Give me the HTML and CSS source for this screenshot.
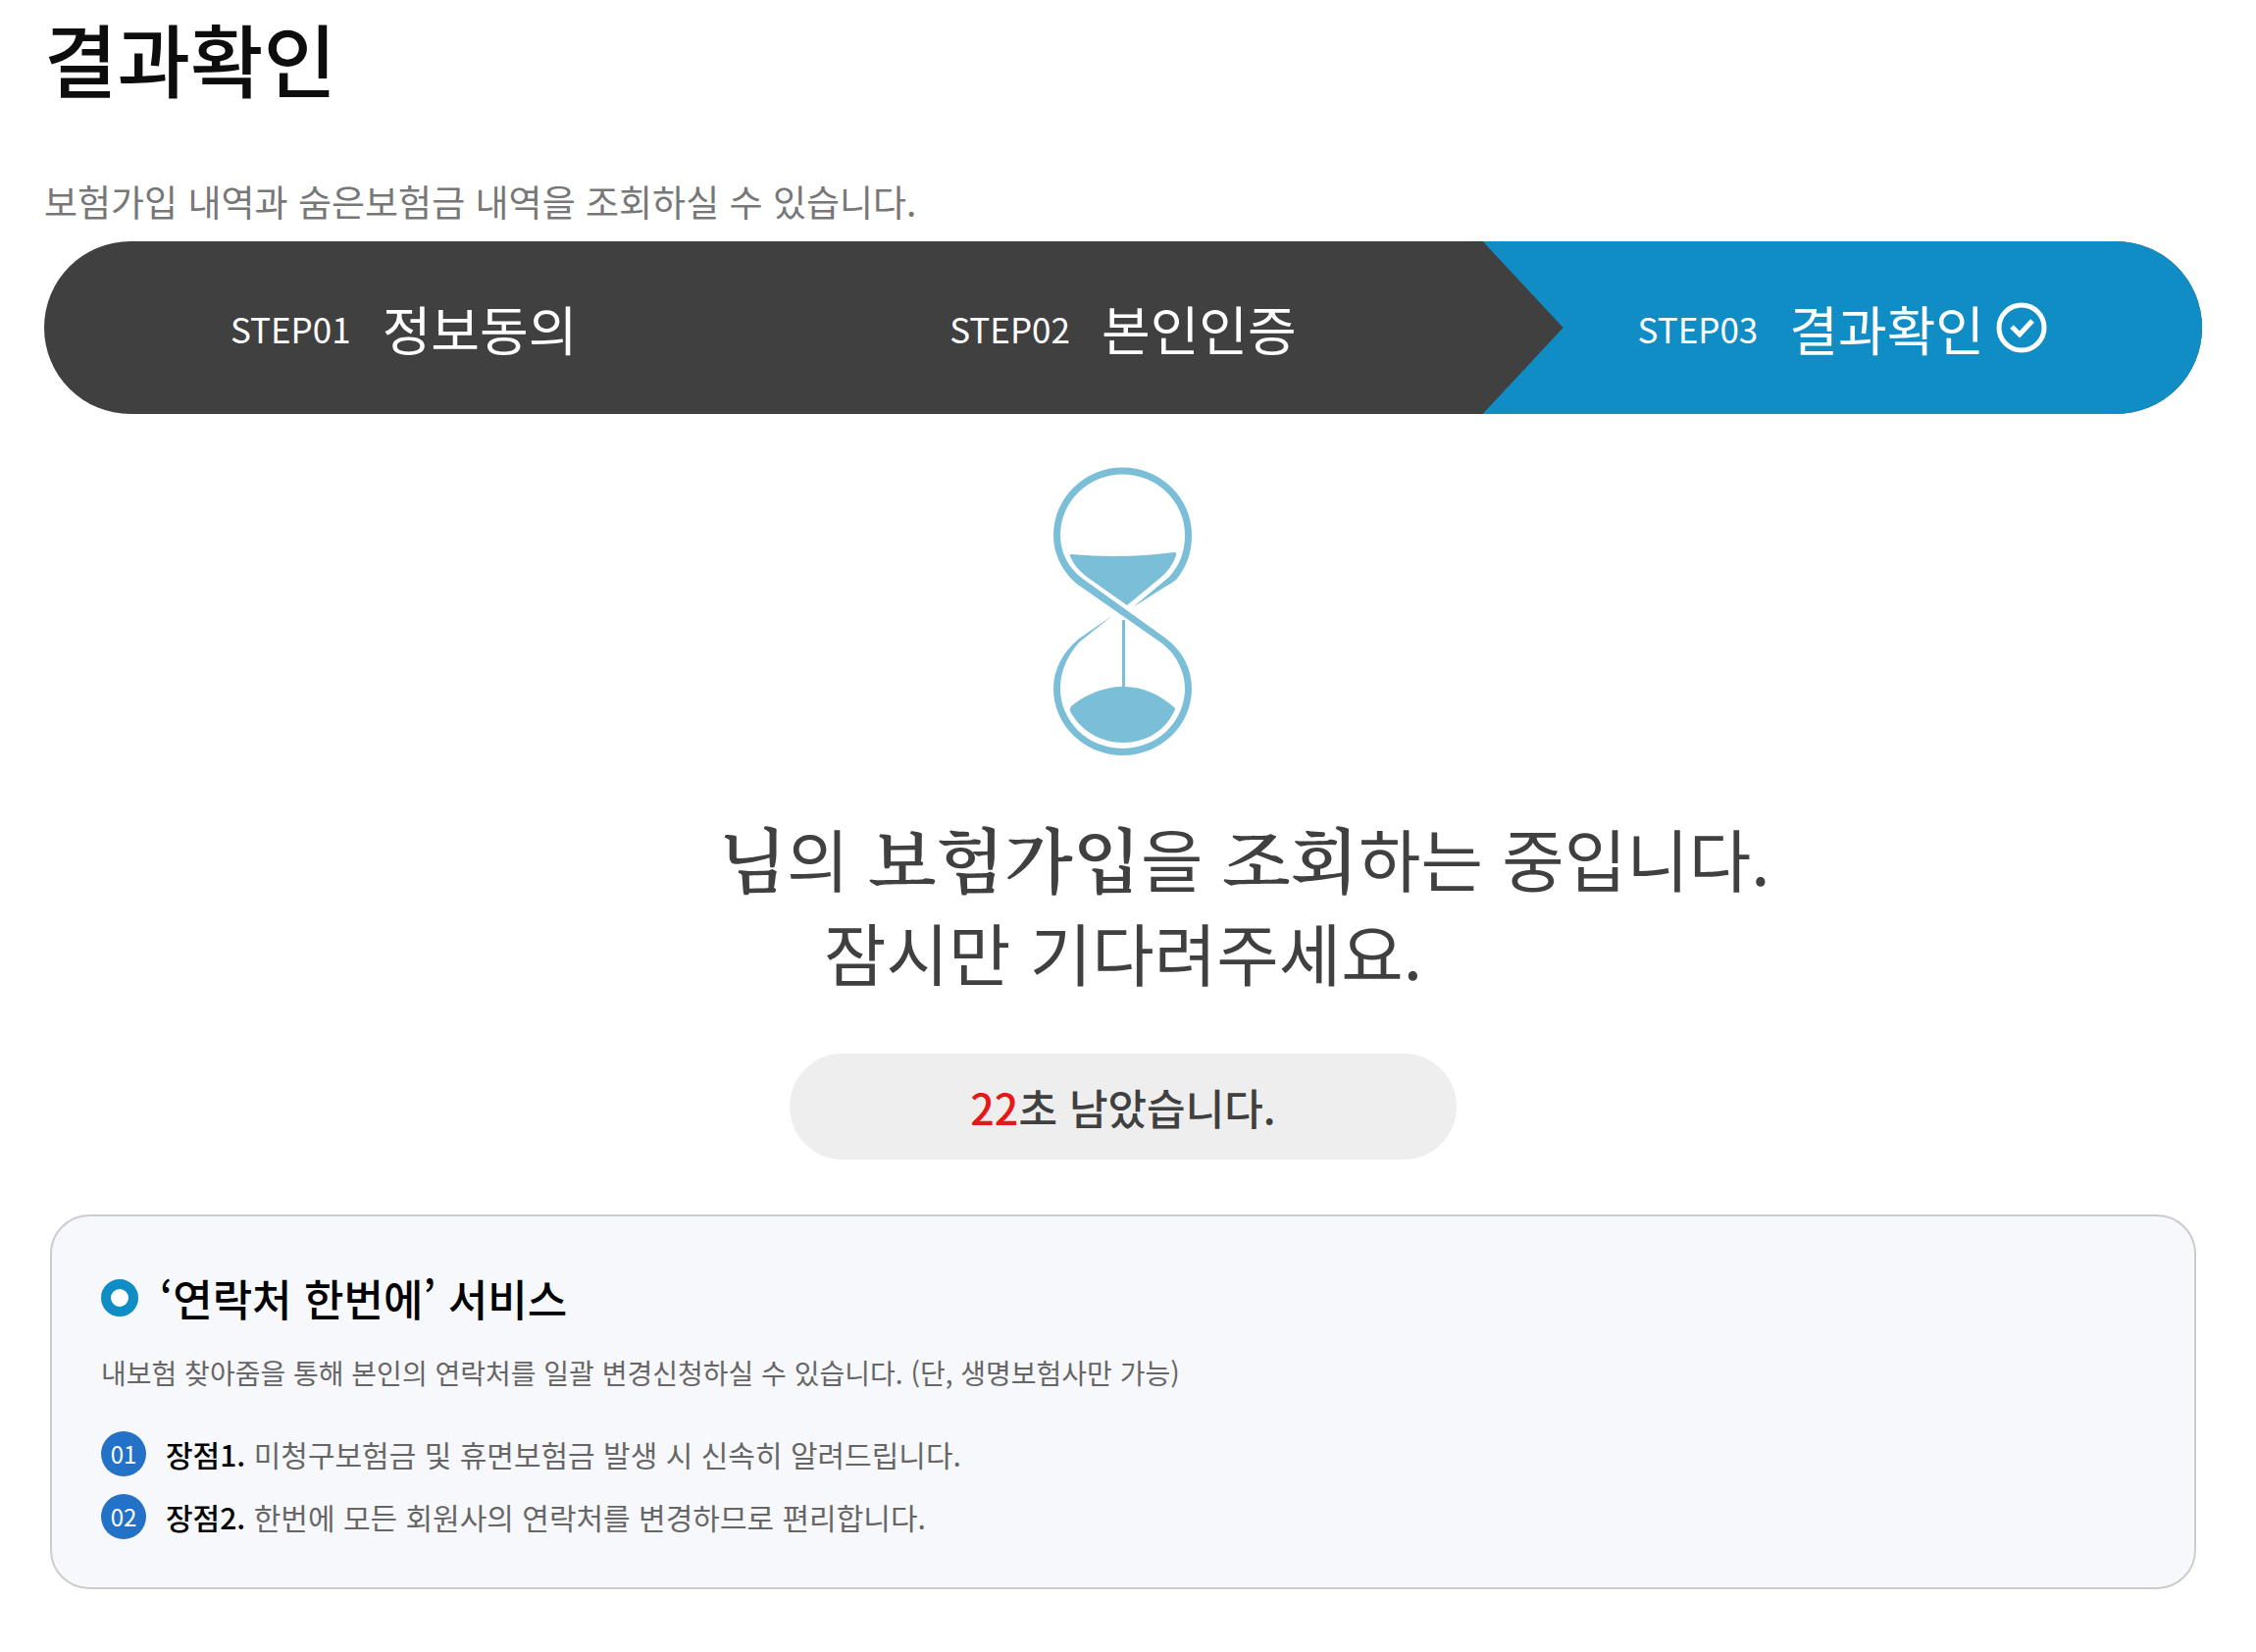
FILE: index.html
```html
<!DOCTYPE html>
<html lang="ko">
<head>
<meta charset="utf-8">
<meta name="viewport" content="width=device-width, initial-scale=1">
<title>결과확인</title>
<link rel="stylesheet" href="styles.css">
</head>
<body>
<main class="page">
  <h1 class="page-title">결과확인</h1>
  <p class="page-desc">보험가입 내역과 숨은보험금 내역을 조회하실 수 있습니다.</p>

  <ol class="steps">
    <li class="step"><span class="step-no">STEP01</span><span class="step-name">정보동의</span></li>
    <li class="step"><span class="step-no">STEP02</span><span class="step-name">본인인증</span></li>
    <li class="step step-current" aria-current="step">
      <span class="step-no">STEP03</span><span class="step-name">결과확인</span>
      <svg class="step-check" viewBox="0 0 52 52" aria-hidden="true">
        <circle cx="26" cy="26" r="23" fill="none" stroke="#fff" stroke-width="5"/>
        <path d="M16 25l8 8 13-14" fill="none" stroke="#fff" stroke-width="5"/>
      </svg>
    </li>
  </ol>

  <section class="status">
    <svg class="hourglass" viewBox="0 0 142 296" aria-hidden="true">
      <path fill="#7abed8" d="M125 116C136 103 141 88 141 70.500A70.500 69 0 0 0 0 70.500C0 91 10 109 25 121L111 181C126 193 134 210 134 227A63.500 61 0 0 1 7 227C7 208 15 192 27 179L61 152L26 176C9 190 0 208 0 227A70.500 68 0 0 0 141 227C141 207 132 189 115 176L30 115C15 104 7 88 7 70.500A63.500 62 0 0 1 134 70.500C134 87 129 101 118 113L81 144L114 123Q120 120 125 116Z"/>
      <path fill="#7abed8" d="M18 90Q71 95 123 88Q126 88 125 91Q121 104 109 114L75 142L34 113Q21 103 17 92Q16 90 18 90Z"/>
      <path fill="#7abed8" d="M70 157h3v68C91 225 110 234 123 246Q125 248 123 250C114 270 94 282 71 282S28 270 17 250Q16 248 18 245C32 233 52 225 70 225Z"/>
    </svg>
    <p class="status-text">
      <span class="status-line"><span class="user-name"></span><span class="brush">님</span>의 <span class="brush">보험가입</span>을 <span class="brush">조회</span>하는 중입니다.</span>
      <span class="status-line">잠시만 기다려주세요.</span>
    </p>
    <p class="timer" role="timer"><span class="timer-count">22</span>초 남았습니다.</p>
  </section>

  <section class="service">
    <h2 class="service-title">‘연락처 한번에’ 서비스</h2>
    <p class="service-desc">내보험 찾아줌을 통해 본인의 연락처를 일괄 변경신청하실 수 있습니다. (단, 생명보험사만 가능)</p>
    <ul class="merits">
      <li class="merit"><span class="merit-no">01</span><span><strong>장점1.</strong> 미청구보험금 및 휴면보험금 발생 시 신속히 알려드립니다.</span></li>
      <li class="merit"><span class="merit-no">02</span><span><strong>장점2.</strong> 한번에 모든 회원사의 연락처를 변경하므로 편리합니다.</span></li>
    </ul>
  </section>
</main>
</body>
</html>
```

FILE: styles.css
```css
*,
*::before {
  box-sizing: border-box;
}

body {
  margin: 0;
  background: #fff;
  color: #404040;
  font-family: "Noto Sans CJK KR", "Noto Sans", sans-serif;
}

h1,
h2,
p,
ol,
ul {
  margin: 0;
  padding: 0;
}

ol,
ul {
  list-style: none;
}

.page {
  padding: 0 55px 64px 45px;
}

.page-title {
  color: #0d0d0d;
  font-size: 81px;
  font-weight: 500;
  line-height: 116px;
}

.page-desc {
  margin-top: 61px;
  color: #777;
  font-size: 37px;
  line-height: 56px;
}

/* Progress bar */
.steps {
  display: grid;
  grid-template-columns: repeat(3, 1fr);
  margin-top: 13px;
  border-radius: 88px;
  background: #404040;
  color: #fff;
  overflow: hidden;
}

.step {
  display: flex;
  align-items: center;
  justify-content: center;
  height: 176px;
}

.step-no {
  margin-right: 32px;
  font-size: 35px;
}

.step-name {
  font-size: 54px;
}

.step-current {
  background: #108dc4;
  clip-path: polygon(0 0, 100% 0, 100% 100%, 0 100%, 82px 50%);
}

.step-check {
  width: 52px;
  height: 52px;
  margin-left: 12px;
}

/* Waiting status */
.status {
  display: flex;
  flex-direction: column;
  align-items: center;
  margin-top: 53px;
}

.hourglass {
  width: 142px;
  height: 296px;
}

.status-text {
  margin-top: 55px;
  font-size: 69px;
  line-height: 96px;
  text-align: center;
}

.status-line {
  display: block;
}

.user-name {
  display: inline-block;
  width: 247px;
}

.brush {
  font-family: "Noto Serif CJK KR", "Nanum Myeongjo", "UnBatang", "Noto Sans CJK KR", serif;
  font-size: 72px;
  font-weight: 600;
  line-height: 1;
}

.timer {
  width: 680px;
  max-width: 100%;
  margin-top: 56px;
  border-radius: 54px;
  background: #eee;
  font-size: 43px;
  font-weight: 500;
  line-height: 108px;
  text-align: center;
}

.timer-count {
  color: #e51717;
}

/* Service card */
.service {
  margin: 56px 6px 0;
  padding: 49px 50px;
  border: 2px solid #ccc;
  border-radius: 40px;
  background: #f7f8fc;
}

.service-title {
  display: flex;
  align-items: center;
  gap: 22px;
  color: #000;
  font-size: 44px;
  font-weight: 500;
  line-height: 68px;
}

.service-title::before {
  content: "";
  width: 38px;
  height: 38px;
  border: 10px solid #108dc4;
  border-radius: 50%;
  background: #fff;
}

.service-desc {
  margin-top: 20px;
  color: #666;
  font-size: 28px;
  line-height: 44px;
}

.merits {
  display: grid;
  gap: 18px;
  margin-top: 38px;
}

.merit {
  display: flex;
  align-items: center;
  gap: 20px;
  color: #666;
  font-size: 30px;
  line-height: 46px;
}

.merit strong {
  color: #000;
  font-weight: 500;
}

.merit-no {
  width: 46px;
  height: 46px;
  border-radius: 50%;
  background: #2472c8;
  color: #fff;
  font-size: 24px;
  text-align: center;
}
```
